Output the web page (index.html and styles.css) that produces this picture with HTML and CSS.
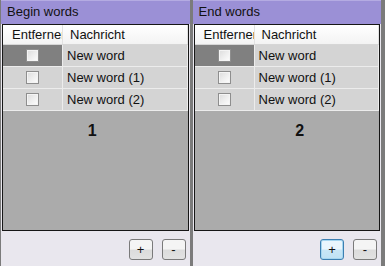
FILE: index.html
```html
<!doctype html>
<html lang="de">
<head>
<meta charset="utf-8">
<title>Words</title>
<link rel="stylesheet" href="styles.css">
</head>
<body>

	<div class="panel">
		<div class="title">Begin words</div>
		<div class="grid">
			<div class="row head">
				<div class="cell first">Entferner</div>
				<div class="cell">Nachricht</div>
			</div>
			<div class="row">
				<div class="cell first selected"><span class="check"></span></div>
				<div class="cell">New word</div>
			</div>
			<div class="row">
				<div class="cell first"><span class="check"></span></div>
				<div class="cell">New word (1)</div>
			</div>
			<div class="row">
				<div class="cell first"><span class="check"></span></div>
				<div class="cell">New word (2)</div>
			</div>
			<div class="number">1</div>
		</div>
		<div class="footer">
			<button>+</button>
			<button>-</button>
		</div>
	</div>

	<div class="panel">
		<div class="title">End words</div>
		<div class="grid">
			<div class="row head">
				<div class="cell first">Entferner</div>
				<div class="cell">Nachricht</div>
			</div>
			<div class="row">
				<div class="cell first selected"><span class="check"></span></div>
				<div class="cell">New word</div>
			</div>
			<div class="row">
				<div class="cell first"><span class="check"></span></div>
				<div class="cell">New word (1)</div>
			</div>
			<div class="row">
				<div class="cell first"><span class="check"></span></div>
				<div class="cell">New word (2)</div>
			</div>
			<div class="number num2">2</div>
		</div>
		<div class="footer">
			<button class="focus">+</button>
			<button>-</button>
		</div>
	</div>

</body>
</html>
```
FILE: styles.css
```css
body { background: #7b7b7b; box-sizing: border-box; color: #111; display: flex; font: 13px "Liberation Sans", Arial, sans-serif; gap: 3px; height: 266px; margin: 0; overflow: hidden; padding: 0 4px 0 1px; }

.panel { background: #e9e7ee; display: flex; flex: 1; flex-direction: column; min-width: 0; }

.title { background: #9b90d6; border-top: 1px solid #b4abe2; box-sizing: border-box; height: 24px; line-height: 22px; padding-left: 6px; }

.grid { background: #ababab; border: 1px solid #161616; flex: 1; margin: 0 1px; overflow: hidden; }

.row { background: #d4d4d4; border-bottom: 1px solid #ececec; display: flex; height: 21px; }
.row.head { background: linear-gradient( #ffffff, #f3f3f3 ); border-bottom: 1px solid #d6d6d6; height: 19px; }

.cell { align-items: center; border-right: 1px solid #ececec; box-sizing: border-box; display: flex; flex: 1; overflow: hidden; padding-left: 4px; white-space: nowrap; }
.cell.first { flex: 0 0 60px; justify-content: center; padding: 0; }
.head .cell { border-right-color: #e2e2e2; padding-left: 7px; }
.head .cell.first { justify-content: flex-start; padding-left: 9px; padding-right: 2px; }
.cell.selected { background: #808080; }

.check { background: linear-gradient( 135deg, #dcdcdc, #ffffff ); border: 1px solid #8e8e8e; box-shadow: inset 0 0 0 1px #f4f4f4; height: 11px; width: 11px; }

.number { font-size: 16px; font-weight: bold; margin-top: 11px; padding-right: 6px; text-align: center; }
.number.num2 { padding: 0 0 0 26px; }

.footer { box-sizing: border-box; display: flex; gap: 9px; height: 35px; justify-content: flex-end; padding: 8px 4px 0 0; }

button { background: linear-gradient( #f4f4f4 45%, #dcdcdc 55%, #e2e2e2 ); border: 1px solid #7a7a7a; border-radius: 3px; color: #111; font: 13px "Liberation Sans", Arial, sans-serif; height: 21px; padding: 0; width: 24px; }
button.focus { background: linear-gradient( #eaf6fd 45%, #c8e6f6 55%, #bfe2f5 ); border-color: #3c7fb1; box-shadow: inset 0 0 0 1px #a6d6f0; }
```
